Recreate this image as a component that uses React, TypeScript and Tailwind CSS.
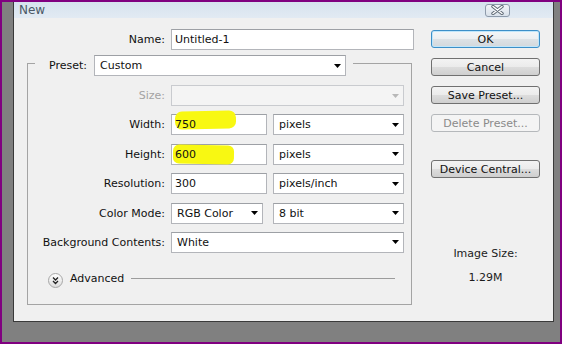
import clsx from 'clsx'

// ─── small parts ────────────────────────────────────────────────────────────

function Arrow({ disabled }: { disabled?: boolean }) {
  return (
    <svg width="7" height="4" viewBox="0 0 7 4" className="shrink-0">
      <path d="M0 0h7L3.5 4z" fill={disabled ? '#b8b8b8' : '#000'} />
    </svg>
  )
}

function Select({
  value,
  className,
  disabled,
}: {
  value?: string
  className?: string
  disabled?: boolean
}) {
  return (
    <div
      className={clsx(
        'flex h-[21px] items-center justify-between border pl-[5px] pr-[4px]',
        disabled
          ? 'border-[#c9cbcf] bg-[#f4f4f4]'
          : 'border-[#b3b5ba] border-t-[#9da0a5] bg-white',
        className,
      )}
    >
      <span className="leading-none">{value}</span>
      <Arrow disabled={disabled} />
    </div>
  )
}

function Field({
  value,
  className,
  mark,
}: {
  value: string
  className?: string
  mark?: React.ReactNode
}) {
  return (
    <div
      className={clsx(
        'relative flex h-[21px] items-center border border-[#b3b5ba] border-t-[#9da0a5] bg-white pl-[3px]',
        className,
      )}
    >
      {mark}
      <span className="relative leading-none">{value}</span>
    </div>
  )
}

function Btn({
  children,
  primary,
  disabled,
  className,
}: {
  children: React.ReactNode
  primary?: boolean
  disabled?: boolean
  className?: string
}) {
  return (
    <div
      className={clsx(
        'flex h-[18px] w-[109px] items-center justify-center rounded-[3px] border leading-none',
        primary &&
          'border-[#3c8fc8] bg-[linear-gradient(#f4f6f8_0%,#eceff1_50%,#dde2e6_50%,#d3d8dc_100%)] shadow-[inset_0_0_0_1px_#bfe6fb]',
        disabled && 'border-[#b5b8bb] bg-[#f4f4f4] text-[#8a8a8a]',
        !primary &&
          !disabled &&
          'border-[#707070] bg-[linear-gradient(#f3f3f3_0%,#ebebeb_50%,#dddddd_50%,#cfcfcf_100%)]',
        className,
      )}
    >
      {children}
    </div>
  )
}

function Label({ children, dim }: { children: React.ReactNode; dim?: boolean }) {
  return (
    <span className={clsx('text-right leading-none', dim && 'text-[#a3a3a3]')}>
      {children}
    </span>
  )
}

// ─── main component ──────────────────────────────────────────────────────────

export default function App() {
  return (
    <div className="flex h-[344px] w-[562px] border-2 border-[#800080] bg-[#808080] pb-[20px] pl-[11px] pr-[6px] font-['DejaVu_Sans',sans-serif] text-[11px] text-[#111]">
      <div className="flex w-[541px] flex-col border-x border-b border-[#3a3a3a]">
        {/* title bar */}
        <div className="flex h-[16px] shrink-0 items-center justify-between bg-[linear-gradient(#d6e2ee,#e2eaf3)] pl-[5px] pr-[43px]">
          <span className="text-[12px] leading-none text-[#4b5866]">New</span>
          <div className="flex h-[13px] w-[25px] items-center justify-center rounded-[3px] border border-[#8e9bab] bg-[linear-gradient(#f1f4f8,#d9e1ea)]">
            <svg width="13" height="10" viewBox="0 0 13 10">
              <path d="M2 1.5l9 7M11 1.5l-9 7" stroke="#5d6874" strokeWidth="3.4" strokeLinecap="round" />
              <path d="M2 1.5l9 7M11 1.5l-9 7" stroke="#fff" strokeWidth="1.5" strokeLinecap="round" />
            </svg>
          </div>
        </div>

        {/* body */}
        <div className="flex flex-1 bg-[#f0f0f0] pl-[13px]">
          {/* left column */}
          <div className="flex w-[387px] flex-col pt-[11px]">
            <div className="flex items-center gap-[6px]">
              <span className="w-[138px] text-right leading-none">Name:</span>
              <Field value="Untitled-1" className="w-[243px]" />
            </div>

            <div className="mt-[13px] flex w-[385px] flex-col border border-[#a4a4a4] pb-[16px]">
              {/* legend */}
              <div className="-mt-[9px] ml-[7px] flex items-center gap-[6px] self-start bg-[#f0f0f0] pl-[14px] pr-[7px]">
                <span className="w-[39px] leading-none">Preset:</span>
                <Select value="Custom" className="w-[252px] pr-[2px]" />
              </div>

              <div className="mt-[9px] grid grid-cols-[137px_233px] items-center gap-x-[6px] gap-y-[8.4px]">
                <Label dim>Size:</Label>
                <Select disabled />

                <Label>Width:</Label>
                <div className="flex justify-between">
                  <Field
                    value="750"
                    className="w-[96px]"
                    mark={
                      <span className="absolute left-[3px] top-[-4px] h-[18px] w-[61px] -rotate-[1.5deg] rounded-[7px] bg-[#f8f812]" />
                    }
                  />
                  <Select value="pixels" className="w-[131px]" />
                </div>

                <Label>Height:</Label>
                <div className="flex justify-between">
                  <Field
                    value="600"
                    className="w-[96px]"
                    mark={
                      <span className="absolute left-[1px] top-[0px] h-[19px] w-[61px] rotate-[1deg] rounded-[6px] bg-[#f8f812]" />
                    }
                  />
                  <Select value="pixels" className="w-[131px]" />
                </div>

                <Label>Resolution:</Label>
                <div className="flex justify-between">
                  <Field value="300" className="w-[96px]" />
                  <Select value="pixels/inch" className="w-[131px]" />
                </div>

                <Label>Color Mode:</Label>
                <div className="flex justify-between">
                  <Select value="RGB Color" className="w-[92px]" />
                  <Select value="8 bit" className="w-[131px]" />
                </div>

                <Label>Background Contents:</Label>
                <Select value="White" />
              </div>

              {/* advanced */}
              <div className="mt-[20px] flex h-[15px] items-center gap-[7px] pl-[20px] pr-[16px]">
                <svg width="15" height="15" viewBox="0 0 15 15" className="shrink-0">
                  <defs>
                    <linearGradient id="adv" x1="0" y1="0" x2="0" y2="1">
                      <stop offset="0" stopColor="#ffffff" />
                      <stop offset="1" stopColor="#dcdcdc" />
                    </linearGradient>
                  </defs>
                  <circle cx="7.5" cy="7.5" r="7" fill="url(#adv)" stroke="#a6a6a6" />
                  <path d="M5 4.5l2.5 2.5 2.5-2.5M5 8l2.5 2.5 2.5-2.5" fill="none" stroke="#222" strokeWidth="1.3" />
                </svg>
                <span className="-mt-[3px] leading-none">Advanced</span>
                <div className="-mt-[4px] h-px flex-1 bg-[#9c9c9c]" />
              </div>
            </div>
          </div>

          {/* right column */}
          <div className="ml-[17px] flex w-[109px] flex-col items-center pt-[12px]">
            <Btn primary>OK</Btn>
            <Btn className="mt-[10px]">Cancel</Btn>
            <Btn className="mt-[10px]">Save Preset...</Btn>
            <Btn disabled className="mt-[10px]">
              Delete Preset...
            </Btn>
            <Btn className="mt-[28px]">Device Central...</Btn>
            <span className="mt-[69px] leading-[13px] text-[#1c1c1c]">Image Size:</span>
            <span className="mt-[11px] leading-[13px] text-[#1c1c1c]">1.29M</span>
          </div>
        </div>
      </div>
    </div>
  )
}
